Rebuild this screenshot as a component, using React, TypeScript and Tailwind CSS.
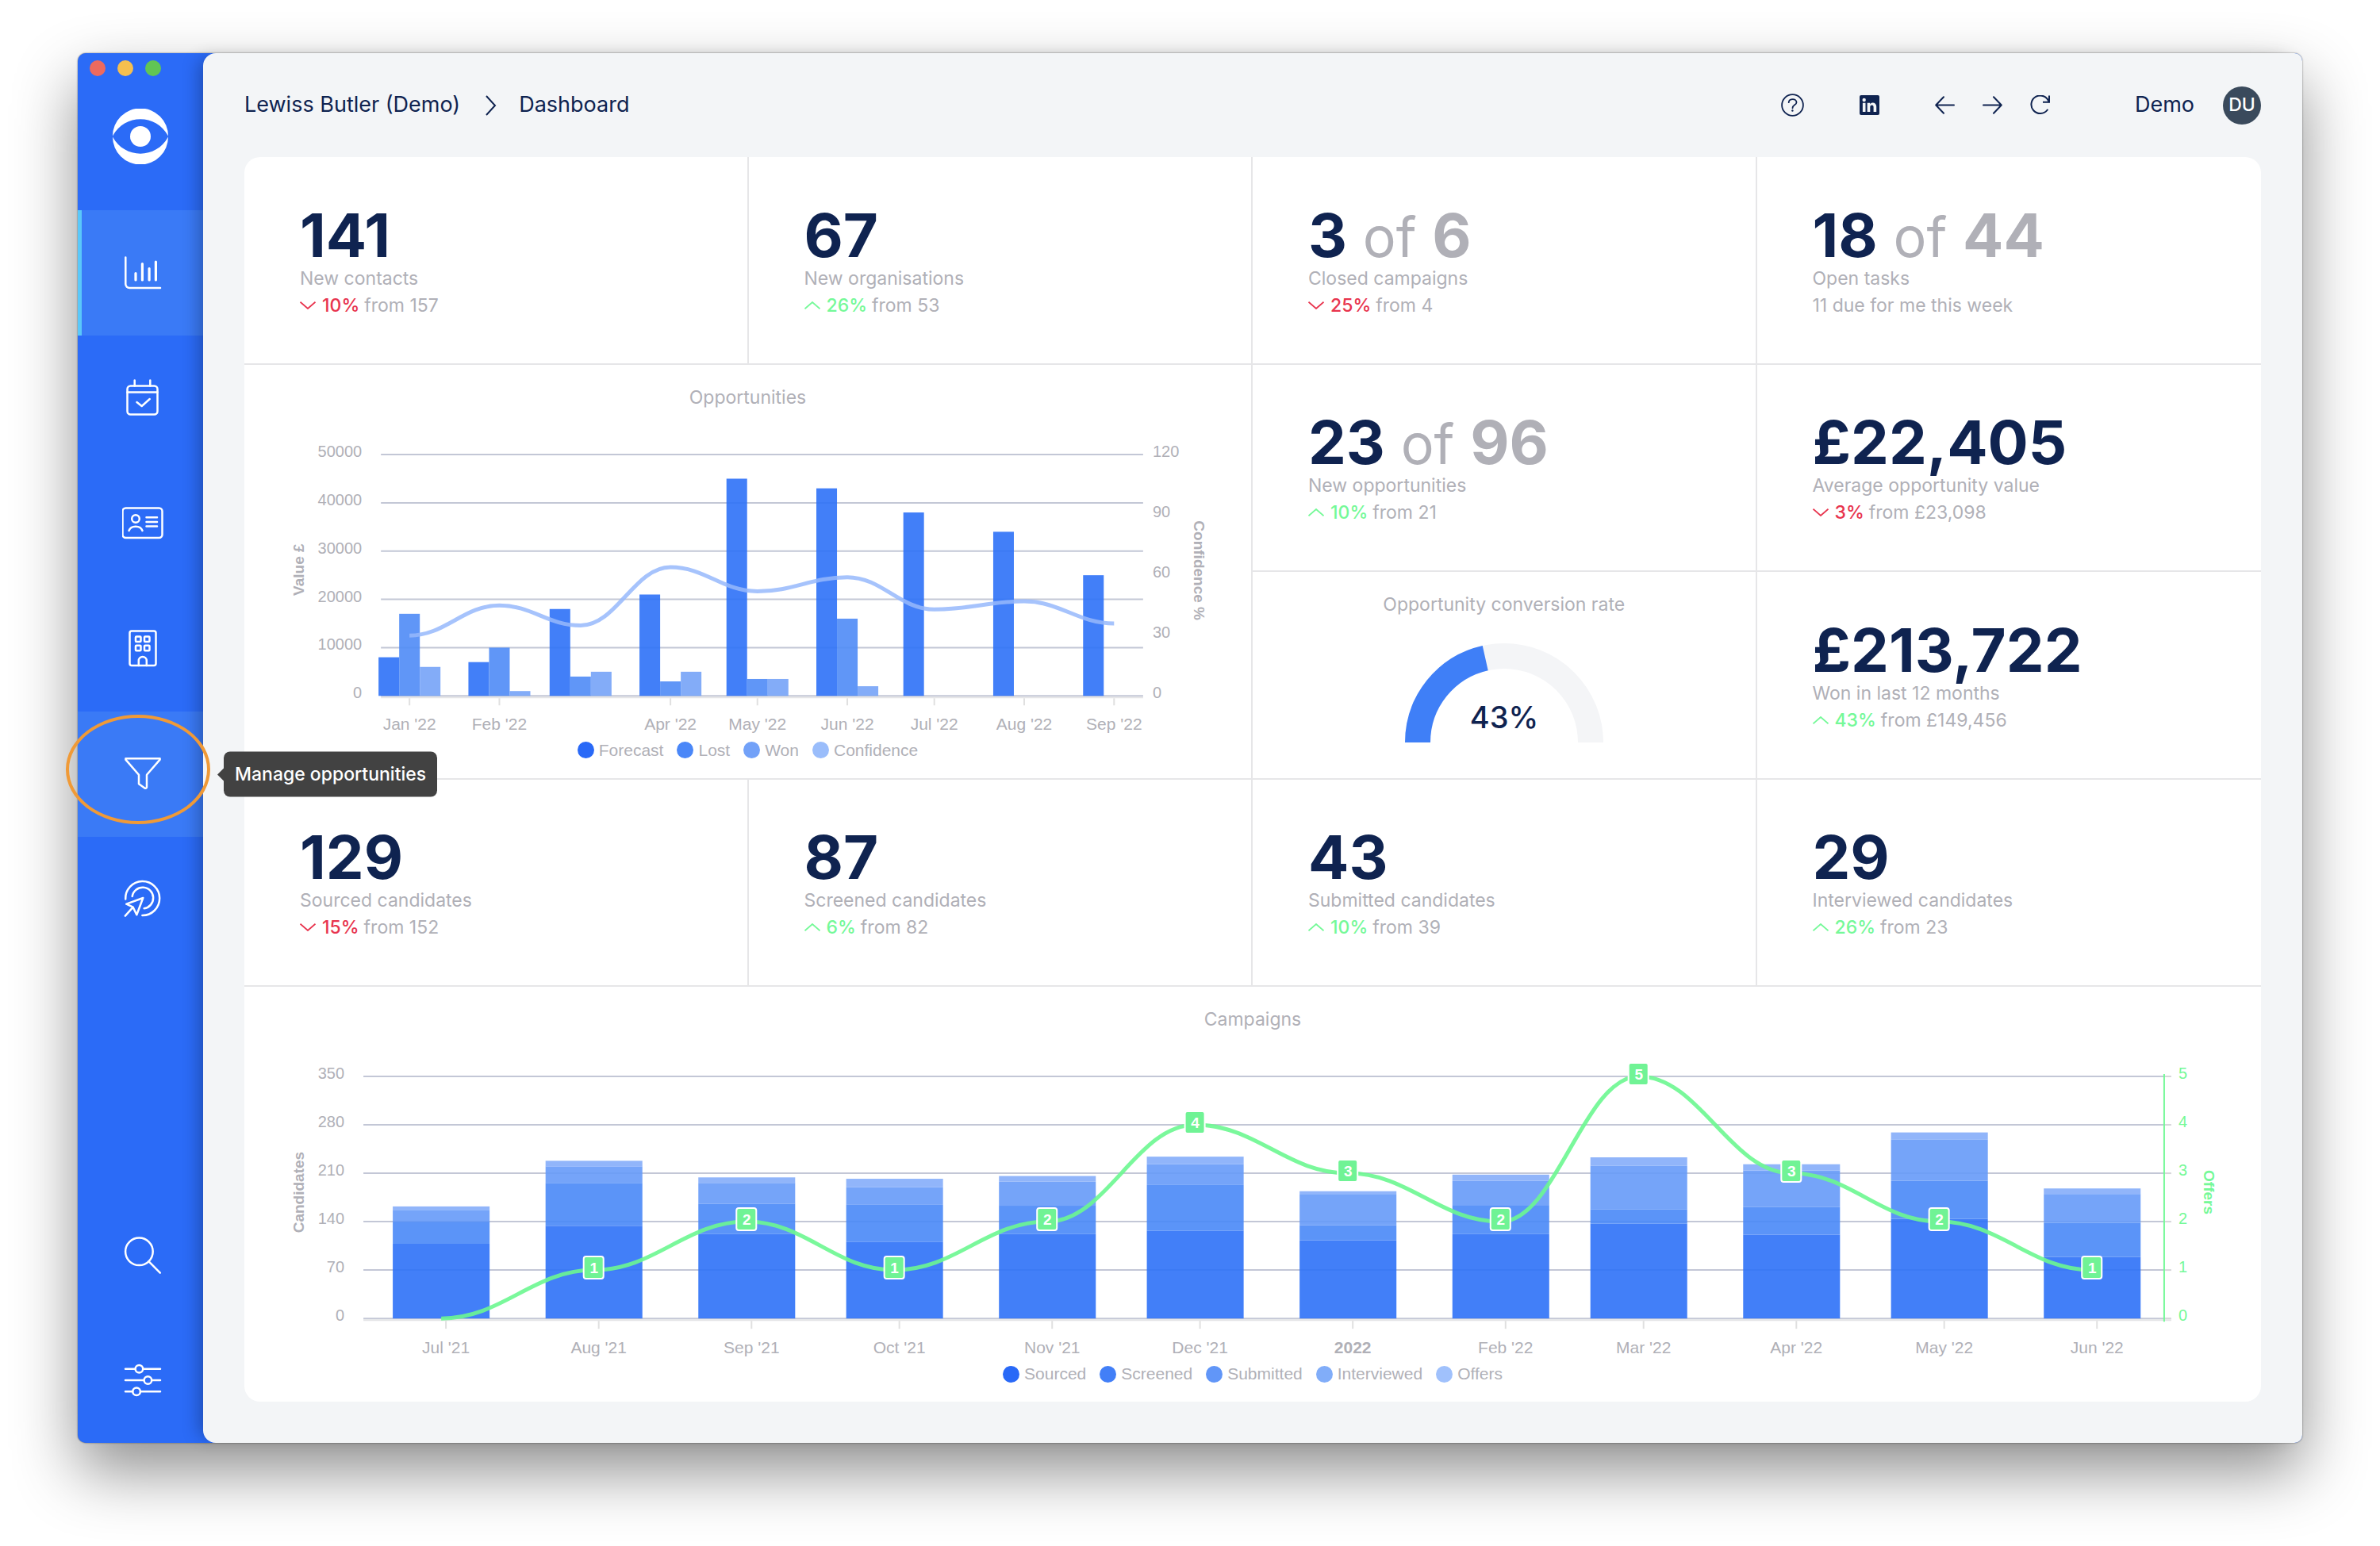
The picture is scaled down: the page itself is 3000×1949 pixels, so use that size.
import { useState } from 'react'
import type { ReactNode } from 'react'

const navIcons: Record<string, ReactNode> = {
  dashboard: (
    <>
      <path d="M1.3 3.5V37a5 5 0 0 0 5 5H45" />
      <path d="M14 23.5v8.5M22.4 11.5V32M31.1 17.5V32M39.4 9V32" strokeWidth="3.2" />
    </>
  ),
  tasks: (
    <>
      <rect x="3.5" y="7.5" width="38" height="36" rx="4" />
      <path d="M3.5 15.5h38M12.7 0.5v7M32.3 0.5v7M15.5 28l6.2 5 10-9" />
    </>
  ),
  contacts: (
    <>
      <rect x="-2.5" y="3.5" width="50" height="37.5" rx="4" />
      <circle cx="14" cy="17" r="4.8" />
      <path d="M5.5 32c2.6-7 14.4-7 17 0M27.5 15.2H41M27.5 20.9H41M27.5 26.6H41" />
    </>
  ),
  organisations: (
    <>
      <rect x="6.5" y="0.5" width="33" height="43.5" rx="2.5" />
      <rect x="14" y="7.5" width="6.5" height="6.5" rx="1" />
      <rect x="25" y="7.5" width="6.5" height="6.5" rx="1" />
      <rect x="14" y="18.7" width="6.5" height="6.5" rx="1" />
      <rect x="25" y="18.7" width="6.5" height="6.5" rx="1" />
      <path d="M17.8 44v-6a5 5 0 0 1 10 0v6" />
    </>
  ),
  opportunities: (
    <path d="M1.4 4.6V3.2h43.2v1.4L28 23.8v15.4a1.6 1.6 0 0 1-2.6 1.2L18 35.2V23.8z" />
  ),
  campaigns: (
    <>
      <path d="M1.2 22.5A21.5 21.5 0 1 1 22.4 43" />
      <path d="M9.7 19A13.3 13.3 0 1 1 24.6 34.2" />
      <path d="M23.3 21 2.3 28.7l8.4 4 4.6 9.6zM0.8 43.6l9.9-10.9" />
    </>
  ),
  search: (
    <>
      <circle cx="18.4" cy="18.8" r="17.3" />
      <path d="M30.4 31.2 44.8 45.7" />
    </>
  ),
  settings: (
    <>
      <path d="M1 8.7h12.4M23.4 8.7H45M1 23h23.4M34.4 23H45M1 37.3h9.1M20.1 37.3H45" />
      <circle cx="18.4" cy="8.7" r="4.8" />
      <circle cx="29.4" cy="23" r="4.8" />
      <circle cx="15.1" cy="37.3" r="4.8" />
    </>
  ),
}

const mainNav = [
  { icon: 'dashboard', label: 'Dashboard' },
  { icon: 'tasks', label: 'Manage tasks' },
  { icon: 'contacts', label: 'Manage contacts' },
  { icon: 'organisations', label: 'Manage organisations' },
  { icon: 'opportunities', label: 'Manage opportunities' },
  { icon: 'campaigns', label: 'Manage campaigns' },
]

const bottomNav = [
  { icon: 'search', label: 'Search' },
  { icon: 'settings', label: 'Settings' },
]

type Stat = {
  value: string
  total?: string
  label: string
  change?: string
  up?: boolean
  note: string
}

const topStats: Stat[] = [
  { value: '141', label: 'New contacts', change: '10%', note: 'from 157' },
  { value: '67', label: 'New organisations', change: '26%', up: true, note: 'from 53' },
  { value: '3', total: '6', label: 'Closed campaigns', change: '25%', note: 'from 4' },
  { value: '18', total: '44', label: 'Open tasks', note: '11 due for me this week' },
]

const candidateStats: Stat[] = [
  { value: '129', label: 'Sourced candidates', change: '15%', note: 'from 152' },
  { value: '87', label: 'Screened candidates', change: '6%', up: true, note: 'from 82' },
  { value: '43', label: 'Submitted candidates', change: '10%', up: true, note: 'from 39' },
  { value: '29', label: 'Interviewed candidates', change: '26%', up: true, note: 'from 23' },
]

// day = days since the first of January
const opportunities = [
  { month: "Jan '22", day: 0, forecast: 8000, lost: 17000, won: 6000, confidence: 30 },
  { month: "Feb '22", day: 31, forecast: 7000, lost: 10000, won: 1000, confidence: 45 },
  { month: '', day: 59, forecast: 18000, lost: 4000, won: 5000, confidence: 35 },
  { month: "Apr '22", day: 90, forecast: 21000, lost: 3000, won: 5000, confidence: 64 },
  { month: "May '22", day: 120, forecast: 45000, lost: 3500, won: 3500, confidence: 52 },
  { month: "Jun '22", day: 151, forecast: 43000, lost: 16000, won: 2000, confidence: 59 },
  { month: "Jul '22", day: 181, forecast: 38000, lost: 0, won: 0, confidence: 43 },
  { month: "Aug '22", day: 212, forecast: 34000, lost: 0, won: 0, confidence: 47 },
  { month: "Sep '22", day: 243, forecast: 25000, lost: 0, won: 0, confidence: 36 },
]

// stack holds the running totals: sourced, screened, submitted, interviewed
const campaigns = [
  { month: "Jul '21", day: 0, stack: [108, 140, 157, 162], offers: 0 },
  { month: "Aug '21", day: 31, stack: [134, 196, 220, 228], offers: 1 },
  { month: "Sep '21", day: 62, stack: [122, 166, 196, 204], offers: 2 },
  { month: "Oct '21", day: 92, stack: [111, 165, 190, 202], offers: 1 },
  { month: "Nov '21", day: 123, stack: [122, 163, 198, 206], offers: 2 },
  { month: "Dec '21", day: 153, stack: [127, 193, 223, 234], offers: 4 },
  { month: '2022', day: 184, stack: [113, 135, 180, 184], offers: 3 },
  { month: "Feb '22", day: 215, stack: [122, 164, 199, 208], offers: 2 },
  { month: "Mar '22", day: 243, stack: [137, 158, 221, 233], offers: 5 },
  { month: "Apr '22", day: 274, stack: [121, 161, 214, 223], offers: 3 },
  { month: "May '22", day: 304, stack: [144, 199, 259, 269], offers: 2 },
  { month: "Jun '22", day: 335, stack: [89, 138, 180, 188], offers: 1 },
]

const stackColors = ['#2d71f7', '#4988f7', '#669af8', '#85adf9']

function smoothPath(points: [number, number][]) {
  return points
    .map(([x, y], i) => {
      if (i === 0) return `M${x} ${y}`
      const [px, py] = points[i - 1]
      const bend = (x - px) * 0.4
      return `C${px + bend} ${py} ${x - bend} ${y} ${x} ${y}`
    })
    .join(' ')
}

function NavItem({ icon, label, active, highlighted }: { icon: string; label: string; active?: boolean; highlighted?: boolean }) {
  return (
    <a
      href={`#${icon}`}
      aria-label={label}
      className={`relative flex h-[158px] items-center justify-center border-l-[5px] ${
        active ? 'border-[#5ac8fa] bg-[#3a7af6]' : highlighted ? 'border-[#3a7af6] bg-[#3a7af6]' : 'border-transparent'
      }`}
    >
      <svg
        viewBox="-3 -3 52 52"
        className="size-[52px] fill-none stroke-white"
        strokeWidth="2.5"
        strokeLinecap="round"
        strokeLinejoin="round"
      >
        {navIcons[icon]}
      </svg>
      {highlighted && (
        <>
          <span className="absolute -left-5 top-1 z-20 h-[138px] w-[182px] rounded-[50%] border-4 border-[#f09a37]" />
          <span
            role="tooltip"
            className="absolute left-[179px] top-1/2 z-20 flex h-[57px] -translate-y-1/2 items-center whitespace-nowrap rounded-lg bg-[#3c3c3c]/97 px-[14px] text-[23px] font-medium text-white"
          >
            <span className="absolute right-full border-y-8 border-r-8 border-y-transparent border-r-[#424242]" />
            {label}
          </span>
        </>
      )}
    </a>
  )
}

function Sidebar() {
  const [current] = useState('dashboard')

  return (
    <aside className="flex w-[158px] shrink-0 flex-col">
      <div className="flex h-[198px] flex-col">
        <div className="flex gap-[15px] pl-[15px] pt-[9px]">
          <button aria-label="Close" className="size-5 rounded-full bg-[#ed6a5e]" />
          <button aria-label="Minimise" className="size-5 rounded-full bg-[#f5bf4f]" />
          <button aria-label="Zoom" className="size-5 rounded-full bg-[#61c554]" />
        </div>
        <svg viewBox="0 0 70 70" className="mx-auto mt-[41px] size-[70px] fill-white">
          <path d="M0 34.5A35 35 0 0 1 70 34.5C55 6.3 15 6.3 0 34.5Z" />
          <path d="M0 35.5A35 35 0 0 0 70 35.5C55 63.7 15 63.7 0 35.5Z" />
          <circle cx="35" cy="35" r="13" />
        </svg>
      </div>
      <nav className="flex flex-1 flex-col">
        {mainNav.map((item) => (
          <NavItem
            key={item.icon}
            icon={item.icon}
            label={item.label}
            active={item.icon === current}
            highlighted={item.icon === 'opportunities'}
          />
        ))}
        <div className="mt-auto">
          {bottomNav.map((item) => (
            <NavItem key={item.icon} icon={item.icon} label={item.label} />
          ))}
        </div>
      </nav>
    </aside>
  )
}

function Header() {
  return (
    <header className="flex h-[131px] items-center text-[27px] text-[#0f2350]">
      <a href="#account">Lewiss Butler (Demo)</a>
      <svg viewBox="0 0 14 26" className="mr-7 ml-8 h-[26px] w-[14px] fill-none stroke-current" strokeWidth="2">
        <path d="M1 1l11 12L1 25" />
      </svg>
      <h1>Dashboard</h1>

      <div className="ml-auto flex items-center">
        <button aria-label="Help" className="mr-[70px]">
          <svg viewBox="0 0 29 29" className="size-[29px] fill-none stroke-current" strokeWidth="1.8">
            <circle cx="14.5" cy="14.5" r="13.4" />
            <path d="M9.7 11.2c0-5.6 10.2-5.4 9.8 0-.3 3.4-5 3-5 7.1" strokeLinecap="round" />
            <circle cx="14.4" cy="21.5" r="1.2" fill="currentColor" stroke="none" />
          </svg>
        </button>
        <button aria-label="LinkedIn" className="mr-[70px]">
          <svg viewBox="0 0 25 25" className="size-[25px]">
            <rect width="25" height="25" rx="2" fill="currentColor" />
            <circle cx="5.7" cy="6" r="2.2" fill="#f3f5f7" />
            <path d="M3.9 9.8h3.6V21H3.9zM9.7 9.8h3.5v1.6c2-3.2 8-2.5 8 2.8V21h-3.6v-6c0-3.4-4.3-3-4.3 0v6H9.7z" fill="#f3f5f7" />
          </svg>
        </button>
        <div className="mr-[107px] flex items-center gap-[35px]">
          <button aria-label="Back">
            <svg viewBox="0 0 25 25" className="size-[25px] fill-none stroke-current" strokeWidth="2" strokeLinecap="round" strokeLinejoin="round">
              <path d="M24 12.5H1.2M11 2.2 1.2 12.5 11 22.8" />
            </svg>
          </button>
          <button aria-label="Forward">
            <svg viewBox="0 0 25 25" className="size-[25px] fill-none stroke-current" strokeWidth="2" strokeLinecap="round" strokeLinejoin="round">
              <path d="M1 12.5h22.8M14 2.2l9.8 10.3L14 22.8" />
            </svg>
          </button>
          <button aria-label="Reload">
            <svg viewBox="0 0 25 25" className="size-[25px] fill-none stroke-current" strokeWidth="2">
              <path d="M21.8 18.5A11.3 11.3 0 1 1 23.5 8.3" strokeLinecap="round" />
              <path d="M24 0.5v8.2h-8" />
            </svg>
          </button>
        </div>
        <span>Demo</span>
        <button aria-label="Account menu" className="ml-9 flex size-12 items-center justify-center rounded-full bg-[#3a4a5c] text-[23px] font-medium text-white">
          DU
        </button>
      </div>
    </header>
  )
}

function StatCard({ stat, last }: { stat: Stat; last?: boolean }) {
  return (
    <section className={`flex flex-col justify-center border-b-2 border-[#e6e6e8] pt-1 pl-[70px] text-[23px] leading-[34px] text-[#b0b0b7] ${last ? '' : 'border-r-2'}`}>
      <p className="text-[76px] leading-[76px] font-bold text-[#0f2350]">
        {stat.value}
        {stat.total && (
          <span className="text-[#b0b0b7]">
            <span className="text-[70px] leading-none font-normal"> of </span>
            {stat.total}
          </span>
        )}
      </p>
      <h2>{stat.label}</h2>
      <p className="flex items-center">
        {stat.change && (
          <span className={`mr-[6px] flex items-center gap-2 font-medium ${stat.up ? 'text-[#75f998]' : 'text-[#e8344e]'}`}>
            <svg viewBox="0 0 20 10" className="h-[10px] w-5 fill-none stroke-current" strokeWidth="1.8">
              <path d={stat.up ? 'M0.5 9.3 10 1l9.5 8.3' : 'M0.5 0.7 10 9l9.5-8.3'} />
            </svg>
            {stat.change}
          </span>
        )}
        {stat.note}
      </p>
    </section>
  )
}

function Legend({ items }: { items: { label: string; dot: string }[] }) {
  return (
    <ul className="flex justify-center gap-[17px] font-['Liberation_Sans',sans-serif] text-[21px] leading-[26px]">
      {items.map((item) => (
        <li key={item.label} className="flex items-center gap-[6px]">
          <span className={`size-[21px] rounded-full ${item.dot}`} />
          {item.label}
        </li>
      ))}
    </ul>
  )
}

function OpportunitiesChart() {
  const top = 55
  const bottom = 359
  const left = 172
  const right = 1132
  const barWidth = 26
  const x = (day: number) => 208 + day * 3.652
  const y = (value: number) => bottom - (value / 50000) * (bottom - top)
  const line = opportunities.map((o): [number, number] => [x(o.day), bottom - (o.confidence / 120) * (bottom - top)])

  return (
    <section className="col-span-2 row-span-2 flex flex-col border-r-2 border-b-2 border-[#e6e6e8] pt-6 text-[#b0b0b7]">
      <h2 className="text-center text-[23px] leading-[34px]">Opportunities</h2>
      <svg viewBox="0 0 1268 415" className="w-full fill-[#b0b0b7] font-['Liberation_Sans',sans-serif] text-[20px]">
        {[0, 1, 2, 3, 4, 5].map((i) => (
          <g key={i}>
            <line x1={left} x2={right} y1={y(i * 10000)} y2={y(i * 10000)} stroke="#c3c7d6" strokeWidth="2" />
            <text x="148" y={y(i * 10000) + 3} textAnchor="end">{i * 10000}</text>
          </g>
        ))}
        {[0, 30, 60, 90, 120].map((v) => (
          <text key={v} x="1144" y={bottom - (v / 120) * (bottom - top) + 3}>{v}</text>
        ))}
        <line x1={left} x2={right} y1={bottom + 2} y2={bottom + 2} stroke="#e4e4e6" strokeWidth="2" />
        <text transform="translate(75 200) rotate(-90)" textAnchor="middle" className="text-[19px] font-bold">Value £</text>
        <text transform="translate(1196 201) rotate(90)" textAnchor="middle" className="text-[19px] font-bold">Confidence %</text>
        {opportunities.map((o) => (
          <g key={o.day}>
            {o.month && <line x1={x(o.day)} x2={x(o.day)} y1={bottom + 3} y2={bottom + 12} stroke="#e0e0e0" strokeWidth="2" />}
            <text x={x(o.day)} y={bottom + 43} textAnchor="middle" className="text-[21px]">{o.month}</text>
            <g fillOpacity="0.9">
              <rect x={x(o.day) - barWidth * 1.5} y={y(o.forecast)} width={barWidth} height={bottom - y(o.forecast)} fill="#2d71f7" />
              <rect x={x(o.day) - barWidth / 2} y={y(o.lost)} width={barWidth} height={bottom - y(o.lost)} fill="#4f8bf6" />
              <rect x={x(o.day) + barWidth / 2} y={y(o.won)} width={barWidth} height={bottom - y(o.won)} fill="#75a3f7" />
            </g>
          </g>
        ))}
        <path d={smoothPath(line)} fill="none" stroke="#96b8fc" strokeOpacity="0.85" strokeWidth="5" />
      </svg>
      <Legend
        items={[
          { label: 'Forecast', dot: 'bg-[#2969f7]' },
          { label: 'Lost', dot: 'bg-[#4a87f8]' },
          { label: 'Won', dot: 'bg-[#72a1f8]' },
          { label: 'Confidence', dot: 'bg-[#9abdfb]' },
        ]}
      />
    </section>
  )
}

function ConversionGauge() {
  const angle = Math.PI * (1 - 0.43)
  const tipX = 125 + 109 * Math.cos(angle)
  const tipY = 125 - 109 * Math.sin(angle)

  return (
    <section className="flex flex-col items-center border-r-2 border-b-2 border-[#e6e6e8] pt-6 text-[#b0b0b7]">
      <h2 className="text-[23px] leading-[34px]">Opportunity conversion rate</h2>
      <svg viewBox="0 0 250 125" className="mt-8 w-[250px]" fill="none" strokeWidth="32">
        <path d="M16 125A109 109 0 0 1 234 125" stroke="#f4f5f7" />
        <path d={`M16 125A109 109 0 0 1 ${tipX} ${tipY}`} stroke="#3f7ff7" />
        <text x="125" y="107" textAnchor="middle" strokeWidth="0" className="fill-[#0f2350] text-[38px] font-medium">43%</text>
      </svg>
    </section>
  )
}

function CampaignsChart() {
  const top = 55
  const bottom = 360
  const left = 150
  const right = 2419
  const x = (day: number) => 248 + day * 6.21
  const y = (value: number) => bottom - (value / 350) * (bottom - top)
  const line = campaigns.map((c): [number, number] => [x(c.day), y(c.offers * 70)])

  return (
    <section className="col-span-4 row-span-2 flex flex-col pt-6 text-[#b0b0b7]">
      <h2 className="text-center text-[23px] leading-[34px]">Campaigns</h2>
      <svg viewBox="0 0 2541 417" className="w-full fill-[#b0b0b7] font-['Liberation_Sans',sans-serif] text-[20px]">
        {[0, 1, 2, 3, 4, 5].map((i) => (
          <g key={i}>
            <line x1={left} x2={right} y1={y(i * 70)} y2={y(i * 70)} stroke="#c3c7d6" strokeWidth="2" />
            <line x1={right} x2={right + 9} y1={y(i * 70)} y2={y(i * 70)} stroke="#d6d6da" strokeWidth="2" />
            <text x="126" y={y(i * 70) + 3} textAnchor="end">{i * 70}</text>
            <text x="2437" y={y(i * 70) + 3} fill="#75f998">{i}</text>
          </g>
        ))}
        <line x1={left} x2={right + 9} y1={bottom + 2} y2={bottom + 2} stroke="#e4e4e6" strokeWidth="2" />
        <line x1={right} x2={right} y1={top - 3} y2={bottom + 4} stroke="#75f998" strokeWidth="2" />
        <text transform="translate(75 201) rotate(-90)" textAnchor="middle" className="text-[19px] font-bold">Candidates</text>
        <text transform="translate(2469 201) rotate(90)" textAnchor="middle" fill="#75f998" className="text-[19px] font-bold">Offers</text>
        {campaigns.map((c) => (
          <g key={c.day}>
            <line x1={x(c.day) + 6} x2={x(c.day) + 6} y1={bottom + 3} y2={bottom + 13} stroke="#e0e0e0" strokeWidth="2" />
            <text x={x(c.day) + 6} y={bottom + 44} textAnchor="middle" className={c.month === '2022' ? 'text-[21px] font-bold' : 'text-[21px]'}>
              {c.month}
            </text>
            {c.stack.map((total, i) => {
              const from = i === 0 ? 0 : c.stack[i - 1]
              return (
                <rect key={i} x={x(c.day) - 61} y={y(total)} width="122" height={y(from) - y(total)} fill={stackColors[i]} fillOpacity="0.9" />
              )
            })}
          </g>
        ))}
        <path d={smoothPath(line)} fill="none" stroke="#6bf790" strokeOpacity="0.9" strokeWidth="5" />
        {campaigns.filter((c) => c.offers > 0).map((c) => (
          <g key={c.day}>
            <rect x={x(c.day) - 13} y={y(c.offers * 70) - 17} width="25" height="28" rx="3" fill="#70f395" stroke="#fff" strokeWidth="2" />
            <text x={x(c.day)} y={y(c.offers * 70) + 4} textAnchor="middle" fill="#fff" className="text-[19px] font-bold">{c.offers}</text>
          </g>
        ))}
      </svg>
      <Legend
        items={[
          { label: 'Sourced', dot: 'bg-[#2969f7]' },
          { label: 'Screened', dot: 'bg-[#427ff7]' },
          { label: 'Submitted', dot: 'bg-[#6196f8]' },
          { label: 'Interviewed', dot: 'bg-[#81adf9]' },
          { label: 'Offers', dot: 'bg-[#a0c1fc]' },
        ]}
      />
    </section>
  )
}

export default function App() {
  return (
    <div className="flex min-h-screen bg-white px-[98px] pt-[67px] pb-[130px] font-['Inter',sans-serif]">
      <div className="flex min-w-0 flex-1 rounded-[10px] bg-[#2b6bf7] shadow-[0_0_2px_rgba(0,0,0,0.6),0_36px_80px_rgba(0,0,0,0.44)]">
        <Sidebar />
        <main className="relative z-10 flex min-w-0 flex-1 flex-col rounded-l-[16px] rounded-r-[10px] bg-[#f3f5f7] px-[52px] pb-[52px] shadow-[-12px_0_22px_-8px_rgba(0,0,0,0.3)]">
          <Header />
          <div className="grid flex-1 auto-rows-fr grid-cols-4 overflow-hidden rounded-[20px] bg-white">
            {topStats.map((stat, i) => (
              <StatCard key={stat.label} stat={stat} last={i === 3} />
            ))}
            <OpportunitiesChart />
            <StatCard stat={{ value: '23', total: '96', label: 'New opportunities', change: '10%', up: true, note: 'from 21' }} />
            <StatCard stat={{ value: '£22,405', label: 'Average opportunity value', change: '3%', note: 'from £23,098' }} last />
            <ConversionGauge />
            <StatCard stat={{ value: '£213,722', label: 'Won in last 12 months', change: '43%', up: true, note: 'from £149,456' }} last />
            {candidateStats.map((stat, i) => (
              <StatCard key={stat.label} stat={stat} last={i === 3} />
            ))}
            <CampaignsChart />
          </div>
        </main>
      </div>
    </div>
  )
}
